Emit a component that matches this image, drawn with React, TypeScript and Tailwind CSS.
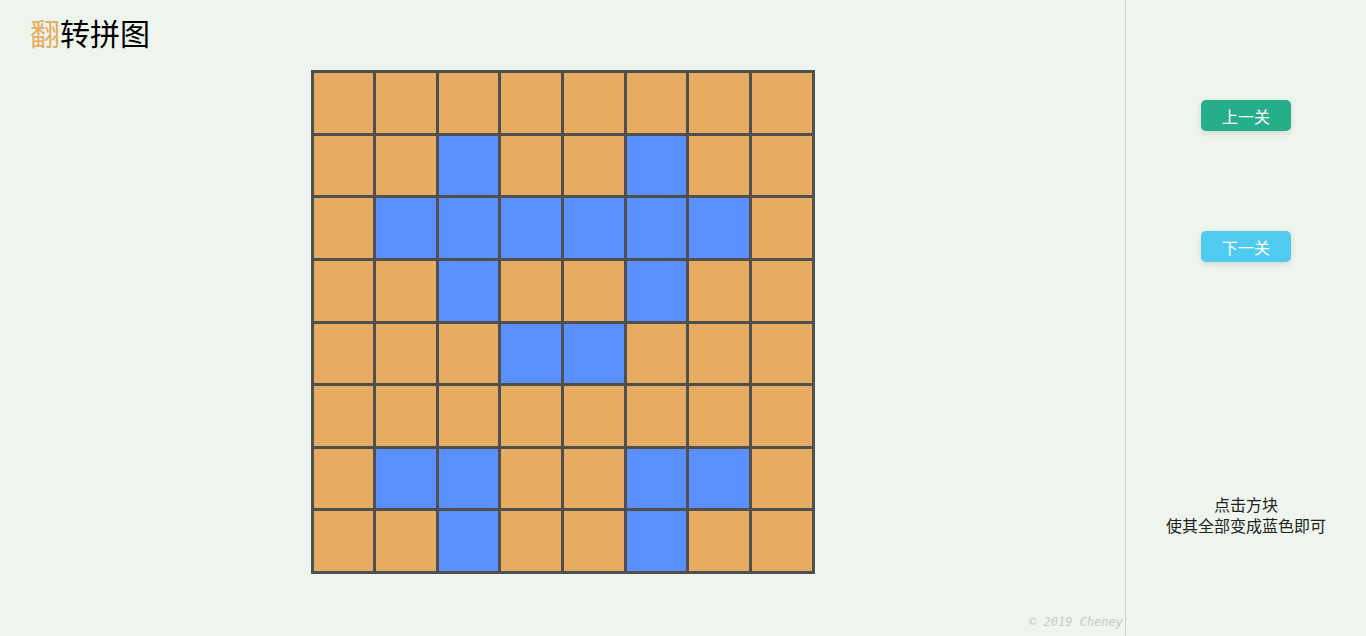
import React, { useState } from 'react';

const initial = [
  [0, 0, 0, 0, 0, 0, 0, 0],
  [0, 0, 1, 0, 0, 1, 0, 0],
  [0, 1, 1, 1, 1, 1, 1, 0],
  [0, 0, 1, 0, 0, 1, 0, 0],
  [0, 0, 0, 1, 1, 0, 0, 0],
  [0, 0, 0, 0, 0, 0, 0, 0],
  [0, 1, 1, 0, 0, 1, 1, 0],
  [0, 0, 1, 0, 0, 1, 0, 0],
];

const font = "font-['Noto_Sans_CJK_SC','Microsoft_YaHei',sans-serif]";

export default function App() {
  const [board, setBoard] = useState(initial);

  const flip = (r: number, c: number) => {
    const next = board.map((row) => [...row]);
    [[r, c], [r - 1, c], [r + 1, c], [r, c - 1], [r, c + 1]].forEach(([y, x]) => {
      if (next[y] && next[y][x] !== undefined) next[y][x] = next[y][x] ? 0 : 1;
    });
    setBoard(next);
  };

  return (
    <div className={`flex h-[636px] w-[1366px] bg-[#edf5ed] ${font}`}>
      <div className="flex w-[1125px] flex-col">
        <h1 className="pl-[30px] pt-[12px] text-[30px] leading-[40px] font-normal text-black">
          <span className="text-[#e6ac62]">翻</span>转拼图
        </h1>
        <div className="mx-auto mt-[18px] grid h-[504px] w-[504px] grid-cols-8 gap-[3px] bg-[#4f4f4f] p-[3px]">
          {board.map((row, r) =>
            row.map((cell, c) => (
              <div
                key={`${r}-${c}`}
                onClick={() => flip(r, c)}
                className={`cursor-pointer ${cell ? 'bg-[#5b8ffe]' : 'bg-[#e6ac62]'}`}
              />
            ))
          )}
        </div>
        <div className="mt-auto pb-[5px] pr-[2px] text-right font-['DejaVu_Sans_Mono',monospace] text-[12px] italic text-[#c8c8c8]">
          © 2019 Cheney
        </div>
      </div>
      <div className="flex w-[241px] flex-col items-center border-l border-[#d0d0d0] pt-[100px]">
        <button className="h-[31px] w-[90px] rounded-[5px] bg-[#25ae88] text-[16px] text-white shadow-[0_2px_6px_rgba(0,0,0,0.12)]">
          上一关
        </button>
        <button className="mt-[100px] h-[31px] w-[90px] rounded-[5px] bg-[#50cbef] text-[16px] text-white shadow-[0_2px_6px_rgba(0,0,0,0.12)]">
          下一关
        </button>
        <div className="mt-[232px] text-center text-[16px] leading-[21px] text-[#222]">
          <p>点击方块</p>
          <p>使其全部变成蓝色即可</p>
        </div>
      </div>
    </div>
  );
}
